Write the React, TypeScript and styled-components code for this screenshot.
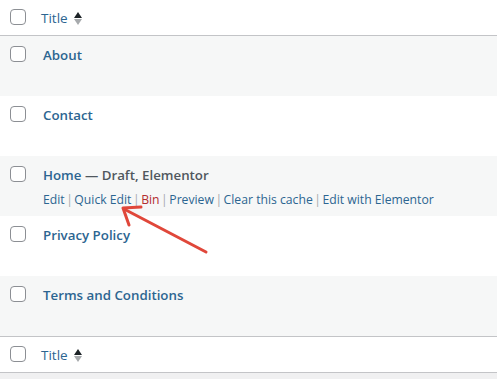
import React from 'react';
import styled, { createGlobalStyle } from 'styled-components';

const GlobalStyle = createGlobalStyle`
  html, body {
    margin: 0;
    padding: 0;
    background: #f0f0f1;
    font-family: "Open Sans", "Noto Sans", sans-serif;
    color: #3c434a;
  }
`;

const Page = styled.div`
  position: relative;
  width: 497px;
  height: 379px;
  overflow: hidden;
`;

const Table = styled.div`
  background: #fff;
  border-bottom: 1px solid #c3c4c7;
`;

const HeadRow = styled.div<{ $top?: boolean }>`
  display: grid;
  grid-template-columns: 41px 1fr;
  height: 36px;
  box-sizing: border-box;
  ${(p) => (p.$top ? 'border-bottom: 1px solid #c3c4c7;' : 'border-top: 1px solid #c3c4c7;')}
`;

const CheckCell = styled.div<{ $head?: boolean }>`
  padding: ${(p) => (p.$head ? '9px 0 0 10px' : '10px 0 0 10px')};
`;

const Box = styled.span`
  display: block;
  width: 16px;
  height: 16px;
  box-sizing: border-box;
  border: 1px solid #8c8f94;
  border-radius: 4px;
  background: #fff;
`;

const SortLabel = styled.div`
  display: flex;
  align-items: center;
  gap: 6px;
  font-size: 13.5px;
  color: #2c6591;
  height: 36px;
`;

const Sorter = styled.span`
  display: flex;
  flex-direction: column;
  gap: 1px;
`;

const Tri = styled.span<{ $up?: boolean }>`
  width: 0;
  height: 0;
  border-left: 4.5px solid transparent;
  border-right: 4.5px solid transparent;
  ${(p) =>
    p.$up ? 'border-bottom: 6px solid #1d2327;' : 'border-top: 6px solid #a7aaad;'}
`;

const Row = styled.div<{ $alt: boolean }>`
  display: grid;
  grid-template-columns: 43px 1fr;
  height: 60px;
  background: ${(p) => (p.$alt ? '#f6f7f7' : '#fff')};
`;

const TitleCell = styled.div`
  padding-top: 10px;
`;

const TitleLine = styled.div`
  font-size: 13.3px;
  font-weight: 600;
  line-height: 19px;
  color: #50575e;
`;

const TitleLink = styled.span`
  color: #2c6591;
`;

const Actions = styled.div<{ $show: boolean }>`
  margin-top: 5px;
  font-size: 12.2px;
  line-height: 19px;
  color: #a7aaad;
  visibility: ${(p) => (p.$show ? 'visible' : 'hidden')};
`;

const Action = styled.span<{ $danger?: boolean }>`
  color: ${(p) => (p.$danger ? '#b32d2e' : '#2c6591')};
`;

const Sep = styled.span`
  color: #a7aaad;
  margin: 0 1.5px;
`;

const Arrow = styled.svg`
  position: absolute;
  left: 0;
  top: 0;
  pointer-events: none;
`;

const pages = [
  { title: 'About' },
  { title: 'Contact' },
  { title: 'Home', state: ' — Draft, Elementor', actions: true },
  { title: 'Privacy Policy' },
  { title: 'Terms and Conditions' },
];

const actionList = [
  { label: 'Edit' },
  { label: 'Quick Edit' },
  { label: 'Bin', danger: true },
  { label: 'Preview' },
  { label: 'Clear this cache' },
  { label: 'Edit with Elementor' },
];

const Header = ({ top }: { top?: boolean }) => (
  <HeadRow $top={top}>
    <CheckCell $head>
      <Box />
    </CheckCell>
    <SortLabel>
      Title
      <Sorter>
        <Tri $up />
        <Tri />
      </Sorter>
    </SortLabel>
  </HeadRow>
);

const App = () => {
  return (
    <Page>
      <GlobalStyle />
      <Table>
        <Header top />
        {pages.map((p, i) => (
          <Row key={p.title} $alt={i % 2 === 0}>
            <CheckCell>
              <Box />
            </CheckCell>
            <TitleCell>
              <TitleLine>
                <TitleLink>{p.title}</TitleLink>
                {p.state}
              </TitleLine>
              <Actions $show={!!p.actions}>
                {actionList.map((a, j) => (
                  <React.Fragment key={a.label}>
                    {j > 0 && <Sep>|</Sep>}
                    <Action $danger={a.danger}>{a.label}</Action>
                  </React.Fragment>
                ))}
              </Actions>
            </TitleCell>
          </Row>
        ))}
        <Header />
      </Table>
      <Arrow width="497" height="379" viewBox="0 0 497 379">
        <g stroke="#e0473a" strokeWidth="3" strokeLinecap="round" fill="none">
          <line x1="206" y1="252" x2="124" y2="209" />
          <polyline points="141,207 123,208 129,225" strokeLinejoin="round" />
        </g>
      </Arrow>
    </Page>
  );
};

export default App;
